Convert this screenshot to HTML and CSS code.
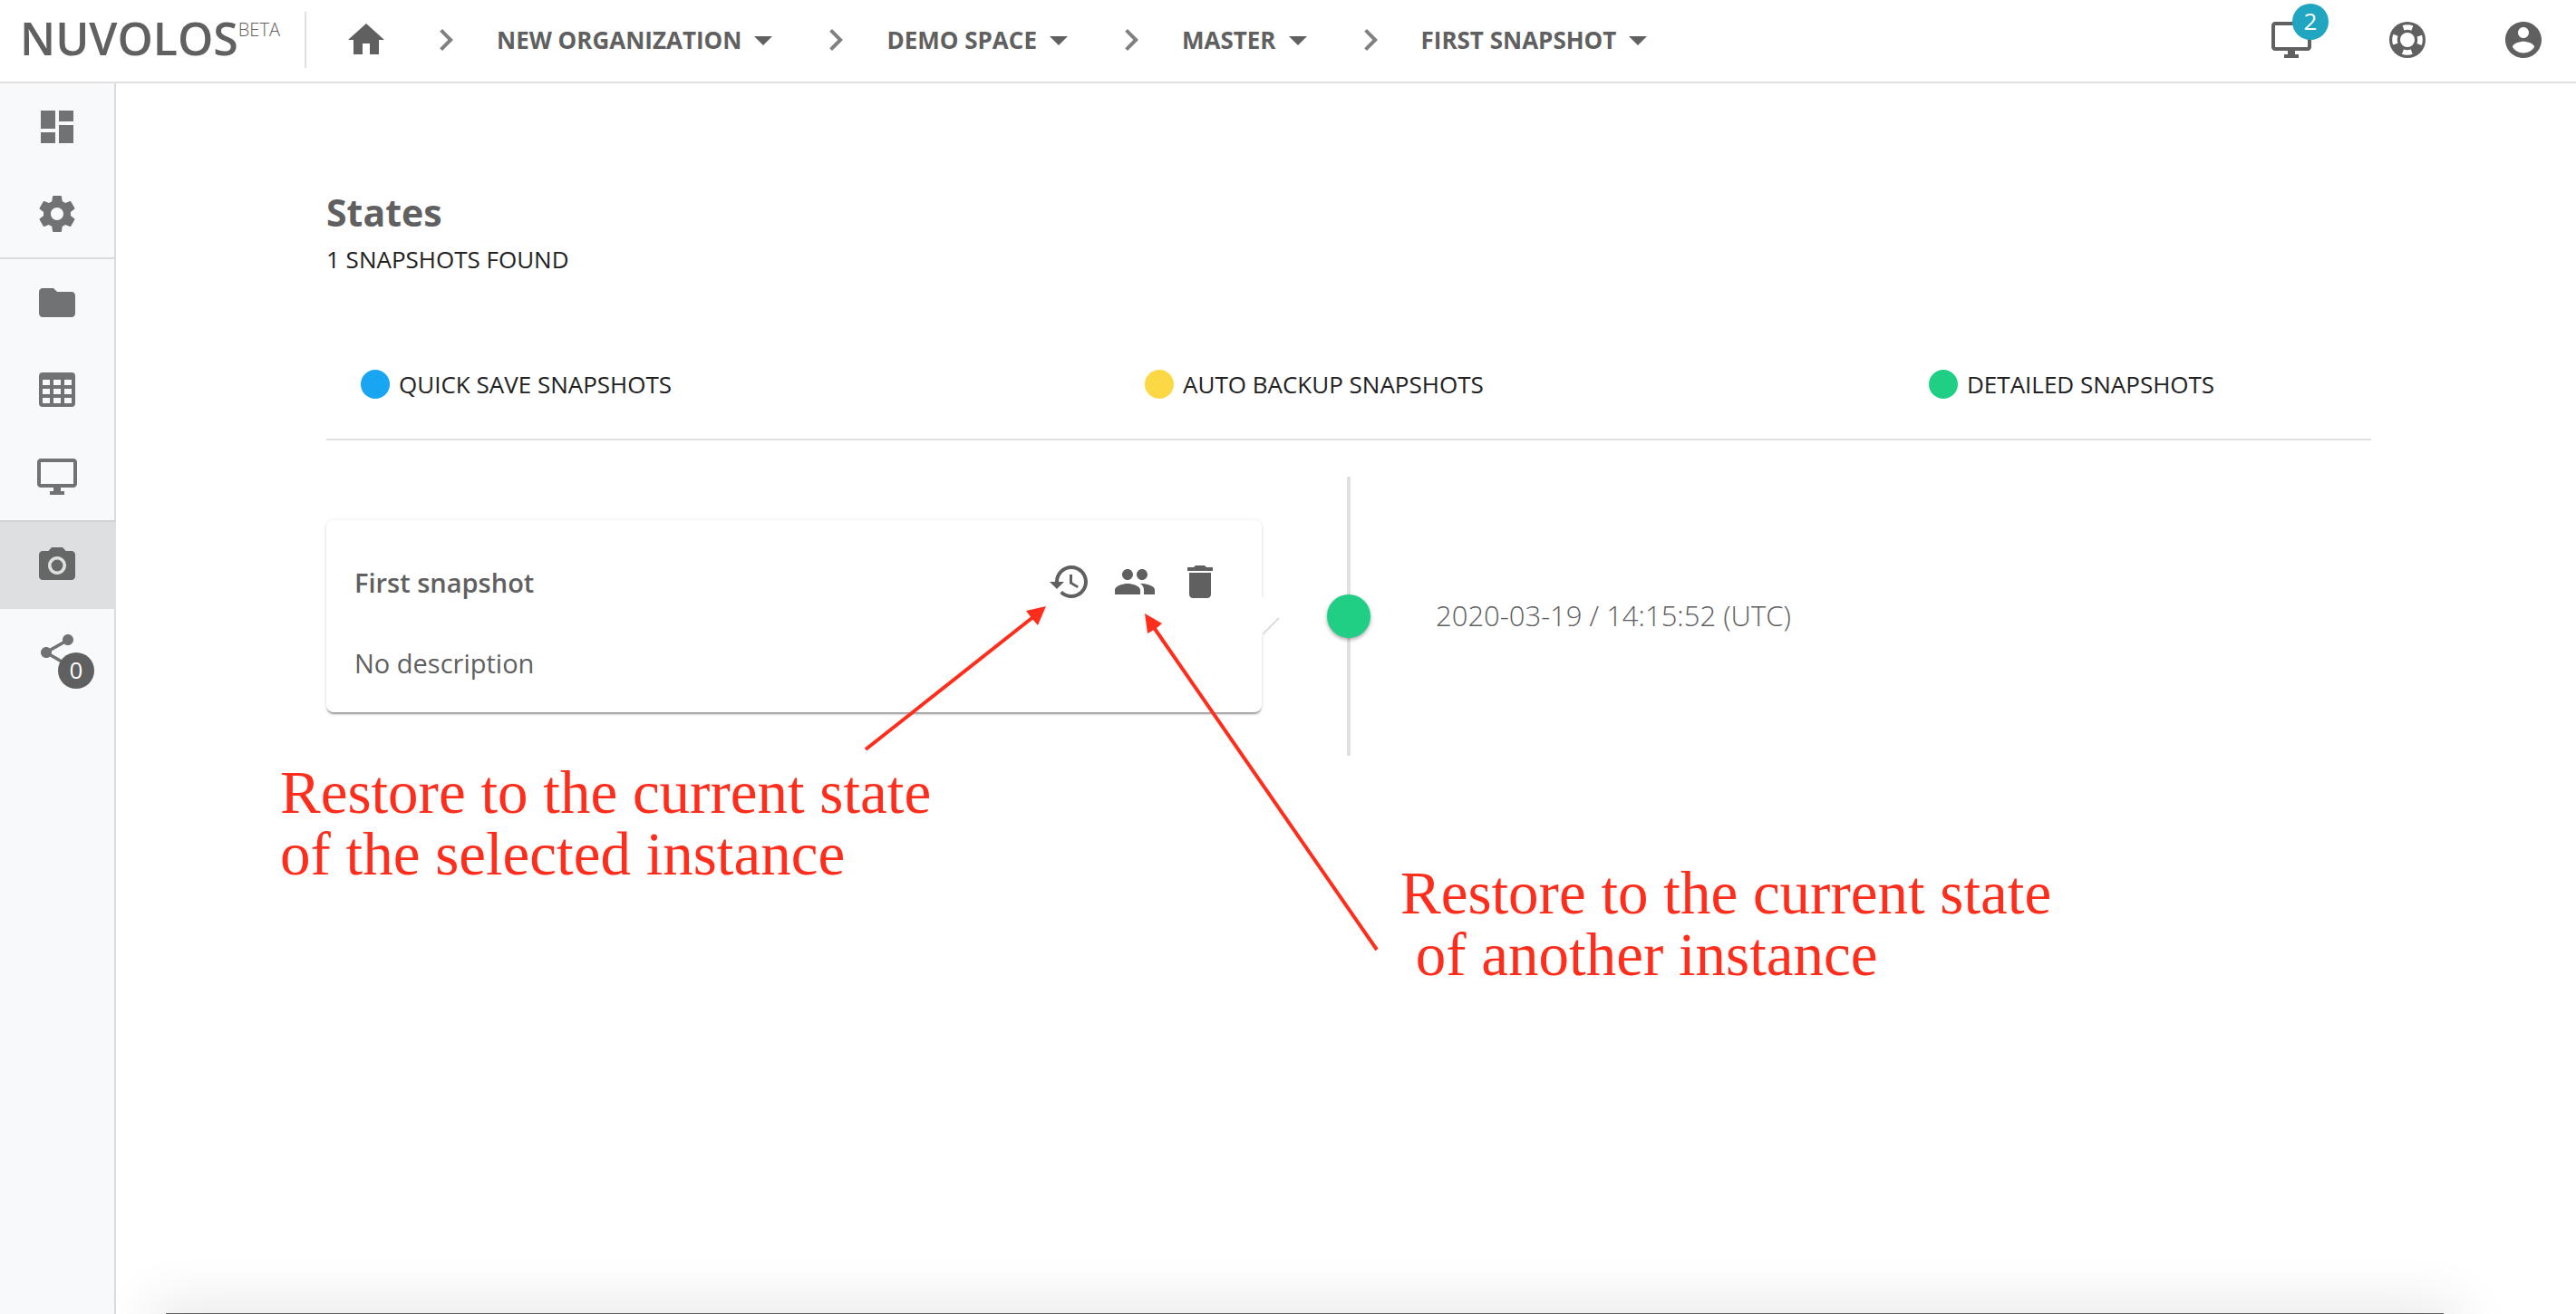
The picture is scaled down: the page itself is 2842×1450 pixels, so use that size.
FILE: index.html
```html
<!DOCTYPE html>
<html lang="en">
<head>
<meta charset="utf-8">
<title>Nuvolos - States</title>
<link rel="stylesheet" href="styles.css">
</head>
<body>
<svg class="sprite" aria-hidden="true">
  <symbol id="i-monitor" viewBox="0 0 24 24"><path d="M21 2H3c-1.100 0-2 .9-2 2v12c0 1.100.9 2 2 2h7v2H8v2h8v-2h-2v-2h7c1.100 0 2-.9 2-2V4c0-1.100-.9-2-2-2zm0 14H3V4h18v12z"/></symbol>
  <symbol id="i-chevron" viewBox="0 0 24 24"><path d="M10 6L8.590 7.410 13.170 12l-4.580 4.590L10 18l6-6z"/></symbol>
  <symbol id="i-caret" viewBox="0 0 24 24"><path d="M7 10l5 5 5-5z"/></symbol>
</svg>
<header class="topbar">
  <a class="brand" href="#">NUVOLOS<sup class="brand-tag">BETA</sup></a>
  <nav class="crumbs" aria-label="Breadcrumb">
    <a class="home" href="#" aria-label="Home"><svg class="icon" viewBox="0 0 24 24"><path d="M10 20v-6h4v6h5v-8h3L12 3 2 12h3v8z"/></svg></a>
    <svg class="icon chevron"><use href="#i-chevron"/></svg>
    <button class="crumb" type="button">NEW ORGANIZATION<svg class="icon"><use href="#i-caret"/></svg></button>
    <svg class="icon chevron"><use href="#i-chevron"/></svg>
    <button class="crumb" type="button">DEMO SPACE<svg class="icon"><use href="#i-caret"/></svg></button>
    <svg class="icon chevron"><use href="#i-chevron"/></svg>
    <button class="crumb" type="button">MASTER<svg class="icon"><use href="#i-caret"/></svg></button>
    <svg class="icon chevron"><use href="#i-chevron"/></svg>
    <button class="crumb" type="button">FIRST SNAPSHOT<svg class="icon"><use href="#i-caret"/></svg></button>
  </nav>
  <div class="tools">
    <button class="tool" type="button" aria-label="Running applications"><svg class="icon"><use href="#i-monitor"/></svg><span class="badge badge-top">2</span></button>
    <button class="tool" type="button" aria-label="Help"><svg class="icon" viewBox="0 0 24 24"><circle cx="12" cy="12" r="10"/><circle cx="12" cy="12" r="4" fill="#fff"/><circle cx="12" cy="12" r="7" fill="none" stroke="#fff" stroke-width="2.800" stroke-dasharray="5 5.996" stroke-dashoffset="2.500"/></svg></button>
    <button class="tool" type="button" aria-label="Account"><svg class="icon" viewBox="0 0 24 24"><path d="M12 2C6.480 2 2 6.480 2 12s4.480 10 10 10 10-4.480 10-10S17.520 2 12 2zm0 3c1.660 0 3 1.340 3 3s-1.340 3-3 3-3-1.340-3-3 1.340-3 3-3zm0 14.200c-2.500 0-4.710-1.280-6-3.220.03-1.990 4-3.080 6-3.080 1.990 0 5.970 1.090 6 3.080-1.290 1.940-3.500 3.220-6 3.220z"/></svg></button>
  </div>
</header>
<div class="layout">
  <nav class="sidebar" aria-label="Main">
    <a class="side-item" href="#" aria-label="Dashboard"><svg class="icon" viewBox="0 0 24 24"><path d="M3 13h8V3H3v10zm0 8h8v-6H3v6zm10 0h8V11h-8v10zm0-18v6h8V3h-8z"/></svg></a>
    <a class="side-item" href="#" aria-label="Settings"><svg class="icon" viewBox="0 0 24 24"><path d="M19.430 12.980c.04-.32.07-.64.07-.98s-.03-.66-.07-.98l2.110-1.650c.19-.15.24-.42.12-.64l-2-3.460c-.12-.22-.39-.3-.61-.22l-2.490 1c-.52-.4-1.080-.73-1.690-.98l-.38-2.650C14.460 2.180 14.250 2 14 2h-4c-.25 0-.46.18-.49.42l-.38 2.650c-.61.25-1.170.59-1.690.98l-2.490-1c-.23-.09-.49 0-.61.22l-2 3.460c-.13.22-.07.49.12.64l2.110 1.650c-.04.32-.07.65-.07.98s.03.66.07.98l-2.110 1.650c-.19.15-.24.42-.12.64l2 3.460c.12.22.39.3.61.22l2.490-1c.52.4 1.080.73 1.690.98l.38 2.650c.03.24.24.42.49.42h4c.25 0 .46-.18.49-.42l.38-2.650c.61-.25 1.170-.59 1.690-.98l2.490 1c.23.09.49 0 .61-.22l2-3.460c.12-.22.07-.49-.12-.64l-2.110-1.650zM12 15.500c-1.930 0-3.500-1.570-3.500-3.500s1.570-3.500 3.500-3.500 3.500 1.570 3.500 3.500-1.570 3.500-3.500 3.500z"/></svg></a>
    <a class="side-item divided" href="#" aria-label="Files"><svg class="icon" viewBox="0 0 24 24"><path d="M10 4H4c-1.100 0-1.990.9-1.990 2L2 18c0 1.100.9 2 2 2h16c1.100 0 2-.9 2-2V8c0-1.100-.9-2-2-2h-8l-2-2z"/></svg></a>
    <a class="side-item" href="#" aria-label="Tables"><svg class="icon" viewBox="0 0 24 24"><path fill-rule="evenodd" d="M4 2.500h16a2 2 0 0 1 2 2v15a2 2 0 0 1-2 2H4a2 2 0 0 1-2-2v-15a2 2 0 0 1 2-2zM4 6.500v3h4v-3zM10 6.500v3h4v-3zM16 6.500v3h4v-3zM4 11.500v3h4v-3zM10 11.500v3h4v-3zM16 11.500v3h4v-3zM4 16.500v3h4v-3zM10 16.500v3h4v-3zM16 16.500v3h4v-3z"/></svg></a>
    <a class="side-item" href="#" aria-label="Applications"><svg class="icon"><use href="#i-monitor"/></svg></a>
    <a class="side-item divided active" href="#" aria-label="Snapshots" aria-current="page"><svg class="icon" viewBox="0 0 24 24"><circle cx="12" cy="12" r="3.200"/><path d="M9 2L7.170 4H4c-1.100 0-2 .9-2 2v12c0 1.100.9 2 2 2h16c1.100 0 2-.9 2-2V6c0-1.100-.9-2-2-2h-3.170L15 2H9zm3 15c-2.760 0-5-2.240-5-5s2.240-5 5-5 5 2.240 5 5-2.240 5-5 5z"/></svg></a>
    <a class="side-item" href="#" aria-label="Distribute"><svg class="icon" viewBox="0 0 24 24"><path d="M18 16.080c-.76 0-1.440.3-1.960.77L8.910 12.700c.05-.23.09-.46.09-.7s-.04-.47-.09-.7l7.050-4.110c.54.5 1.250.81 2.040.81 1.660 0 3-1.340 3-3s-1.340-3-3-3-3 1.340-3 3c0 .24.04.47.09.7L8.040 9.810C7.500 9.310 6.790 9 6 9c-1.660 0-3 1.340-3 3s1.340 3 3 3c.79 0 1.500-.31 2.040-.81l7.120 4.160c-.05.21-.08.43-.08.65 0 1.610 1.310 2.920 2.920 2.920s2.920-1.310 2.920-2.920-1.310-2.920-2.920-2.920z"/></svg><span class="badge badge-side">0</span></a>
  </nav>
  <main class="content">
    <h1 class="title">States</h1>
    <p class="subtitle">1 SNAPSHOTS FOUND</p>
    <ul class="legend">
      <li class="legend-item"><span class="dot blue"></span>QUICK SAVE SNAPSHOTS</li>
      <li class="legend-item"><span class="dot yellow"></span>AUTO BACKUP SNAPSHOTS</li>
      <li class="legend-item"><span class="dot green"></span>DETAILED SNAPSHOTS</li>
    </ul>
    <section class="timeline">
      <article class="card">
        <div class="card-head">
          <h2 class="card-title">First snapshot</h2>
          <div class="actions">
            <button class="action" type="button" aria-label="Restore"><svg class="icon" viewBox="0 0 24 24"><path d="M13 3c-4.970 0-9 4.030-9 9H1l3.890 3.890.07.14L9 12H6c0-3.870 3.130-7 7-7s7 3.130 7 7-3.130 7-7 7c-1.930 0-3.680-.79-4.940-2.060l-1.420 1.420C8.270 19.990 10.510 21 13 21c4.970 0 9-4.030 9-9s-4.030-9-9-9zm-1 5v5l4.280 2.540.72-1.210-3.500-2.080V8H12z"/></svg></button>
            <button class="action" type="button" aria-label="Restore to another instance"><svg class="icon" viewBox="0 0 24 24"><path d="M16 11c1.660 0 2.990-1.340 2.990-3S17.660 5 16 5c-1.660 0-3 1.340-3 3s1.340 3 3 3zm-8 0c1.660 0 2.990-1.340 2.990-3S9.660 5 8 5C6.340 5 5 6.340 5 8s1.340 3 3 3zm0 2c-2.330 0-7 1.170-7 3.500V19h14v-2.500c0-2.330-4.670-3.500-7-3.500zm8 0c-.29 0-.62.02-.97.05 1.160.84 1.970 1.970 1.970 3.450V19h6v-2.500c0-2.330-4.670-3.500-7-3.500z"/></svg></button>
            <button class="action" type="button" aria-label="Delete"><svg class="icon" viewBox="0 0 24 24"><path d="M6 19c0 1.100.9 2 2 2h8c1.100 0 2-.9 2-2V7H6v12zM19 4h-3.500l-1-1h-5l-1 1H5v2h14V4z"/></svg></button>
          </div>
        </div>
        <p class="card-text">No description</p>
        <svg class="pointer" viewBox="0 0 20 44"><path d="M0 0L20 22 0 44z" fill="#fff"/><path d="M19 24L1 42" stroke="#ddd" stroke-width="2"/></svg>
      </article>
      <div class="axis"><span class="node"></span></div>
      <time class="stamp">2020-03-19 / 14:15:52 (UTC)</time>
    </section>
    <svg class="arrows" viewBox="0 0 1400 1000" aria-hidden="true">
      <g stroke="#ff2d1c" stroke-width="4"><path d="M827 735L1013 588"/><path d="M1391 956L1144 599"/></g>
      <g fill="#ff2d1c"><path d="M1026 577L1004 582 1010 590 1017 598z"/><path d="M1135 585L1138 607 1147 602 1154 596z"/></g>
    </svg>
    <p class="note note-left">Restore to the current state<br>of the selected instance</p>
    <p class="note note-right">Restore to the current state<br>&nbsp;of another instance</p>
  </main>
</div>
<div class="sheet-edge"></div>
</body>
</html>
```
FILE: styles.css
```css
* { box-sizing: border-box; }

body {
  margin: 0;
  min-height: 100vh;
  display: flex;
  flex-direction: column;
  position: relative;
  overflow: hidden;
  background: #fff;
  color: #606060;
  font-family: "Open Sans", "Noto Sans", sans-serif;
  font-size: 26px;
}

h1, h2, p, ul { margin: 0; padding: 0; font-weight: 400; }
a { color: inherit; text-decoration: none; }
button { border: 0; padding: 0; background: none; color: inherit; font: inherit; }

.sprite { position: absolute; width: 0; height: 0; }
.icon { width: 48px; height: 48px; display: block; flex: none; fill: currentColor; }

.topbar {
  display: flex;
  align-items: center;
  height: 92px;
  padding: 0 34px 2px 0;
  border-bottom: 2px solid #e0e0e0;
}
.brand {
  display: flex;
  align-items: center;
  width: 338px;
  height: 62px;
  padding: 0 0 4px 22px;
  border-right: 2px solid #e0e0e0;
  font-size: 50px;
  font-weight: 600;
}
.brand-tag { align-self: flex-start; padding-top: 8px; font-size: 20px; line-height: 24px; font-weight: 300; }
.crumbs { display: flex; align-items: center; gap: 32px; padding-left: 42px; }
.home { margin-right: 8px; }
.chevron { color: #808080; }
.crumb { display: flex; align-items: center; font-weight: 700; }
.tools { display: flex; gap: 80px; margin-left: auto; }
.tool { position: relative; }

.badge {
  position: absolute;
  width: 40px;
  height: 40px;
  border-radius: 50%;
  color: #fff;
  font-size: 26px;
  line-height: 38px;
  text-align: center;
}
.badge-top { left: 25px; top: -16px; background: #20a6c0; }
.badge-side { left: 64px; top: 48px; background: #606060; }

.layout { display: flex; flex: 1; }
.sidebar { width: 128px; flex: none; background: #f8f9fb; border-right: 2px solid #d9dbde; color: #717274; }
.side-item { display: flex; position: relative; height: 96px; align-items: center; justify-content: center; }
.divided { height: 98px; border-top: 2px solid #dbdcde; }
.active { background: #dedfe1; border-color: #d2d3d5; color: #666867; margin-right: -2px; padding-right: 2px; }

.content { flex: 1; position: relative; padding: 110px 226px 0 232px; }
.title { font-size: 41px; line-height: 64px; font-weight: 700; }
.subtitle { line-height: 40px; color: #222; }
.legend {
  display: flex;
  justify-content: space-between;
  margin-top: 94px;
  padding: 0 38px 36px;
  border-bottom: 2px solid #e0e0e0;
  list-style: none;
  color: #222;
}
.legend-item { display: flex; align-items: center; gap: 10px; width: 450px; height: 48px; }
.dot { width: 32px; height: 32px; border-radius: 50%; }
.blue { background: #18a5f2; }
.yellow { background: #fdd845; }
.green { background: #20cf84; }

.timeline {
  display: grid;
  grid-template-columns: 1fr 192px 1fr;
  align-items: center;
  height: 308px;
  margin-top: 40px;
  font-size: 29px;
}
.card {
  position: relative;
  height: 212px;
  padding: 40px 44px 0 31px;
  border-radius: 8px;
  background: #fff;
  box-shadow: 0 3px 2px -1px rgba(0, 0, 0, .35), 0 1px 4px rgba(0, 0, 0, .15);
}
.card-head { display: flex; align-items: center; justify-content: space-between; height: 56px; }
.card-title { font-size: 29px; font-weight: 600; }
.actions { display: flex; gap: 24px; }
.card-text { margin-top: 42px; line-height: 40px; }
.pointer { position: absolute; left: 100%; top: 84px; width: 20px; height: 44px; }
.axis {
  display: grid;
  place-items: center;
  height: 100%;
  background: linear-gradient(#e0e0e0, #e0e0e0) center / 4px 100% no-repeat;
}
.node { width: 48px; height: 48px; border-radius: 50%; background: #20cf84; box-shadow: 0 2px 4px rgba(0, 0, 0, .35); }
.stamp { padding-bottom: 2px; font-size: 31px; font-weight: 300; }

.arrows { position: absolute; left: 0; top: 0; width: 1400px; height: 1000px; }
.note {
  position: absolute;
  color: #ff2d1c;
  font-family: "Liberation Serif", serif;
  font-size: 67px;
  line-height: 68px;
  white-space: nowrap;
}
.note-left { left: 181px; top: 748px; }
.note-right { left: 1417px; top: 859px; }

.sheet-edge {
  position: absolute;
  left: 183px;
  right: 146px;
  bottom: 0;
  height: 1px;
  background: #5e5e5e;
  box-shadow: 0 16px 64px 16px rgba(0, 0, 0, .16);
}
```
